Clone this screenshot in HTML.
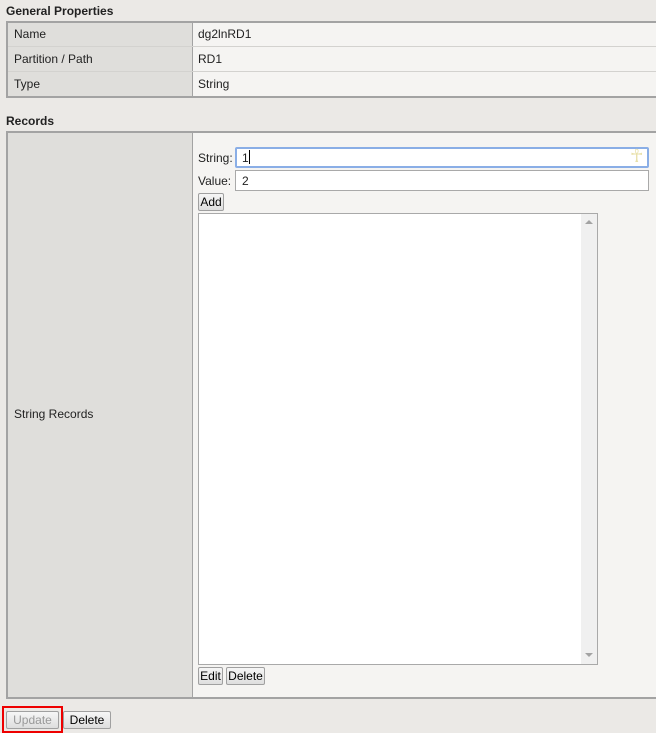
<!DOCTYPE html>
<html><head><style>
*{box-sizing:border-box;margin:0;padding:0}
body{width:656px;height:733px;background:#ebe9e6;font-family:"Liberation Sans",Arial,sans-serif;font-size:12px;color:#222;position:relative;overflow:hidden}
.a{position:absolute}
.h{font-weight:bold;color:#222;font-size:12px}
.lc{background:#dfdedb}
.rc{background:#f5f4f2}
.btn{position:absolute;border:1px solid #a0a0a0;background:linear-gradient(#f6f6f6,#dedede);font-size:12px;height:18px;line-height:16px;text-align:center;color:#000;border-radius:2px}
</style></head><body>
<div class="a h" style="left:6px;top:4px">General Properties</div>
<div class="a" style="left:6px;top:21px;width:650px;height:77px;border-top:2px solid #a3a3a3;border-left:2px solid #a3a3a3;border-bottom:2px solid #a3a3a3;background:#f5f4f2"></div>
<div class="a lc" style="left:8px;top:23px;width:184px;height:73px"></div>
<div class="a" style="left:192px;top:23px;width:1px;height:73px;background:#a3a3a3"></div>
<div class="a" style="left:8px;top:46px;width:648px;height:1px;background:#d3d2cf"></div>
<div class="a" style="left:8px;top:71px;width:648px;height:1px;background:#d3d2cf"></div>
<div class="a" style="left:14px;top:27px">Name</div>
<div class="a" style="left:198px;top:27px">dg2lnRD1</div>
<div class="a" style="left:14px;top:52px">Partition / Path</div>
<div class="a" style="left:198px;top:52px">RD1</div>
<div class="a" style="left:14px;top:77px">Type</div>
<div class="a" style="left:198px;top:77px">String</div>

<div class="a h" style="left:6px;top:114px">Records</div>
<div class="a" style="left:6px;top:131px;width:650px;height:568px;border-top:2px solid #a3a3a3;border-left:2px solid #a3a3a3;border-bottom:2px solid #a3a3a3;background:#f5f4f2"></div>
<div class="a lc" style="left:8px;top:133px;width:184px;height:564px"></div>
<div class="a" style="left:192px;top:133px;width:1px;height:564px;background:#a3a3a3"></div>
<div class="a" style="left:14px;top:407px">String Records</div>

<div class="a" style="left:198px;top:151px">String:</div>
<div class="a" style="left:235px;top:147px;width:414px;height:21px;background:#fff;border:2px solid #8aaee6;border-radius:2px"></div>
<div class="a" style="left:242px;top:151px">1</div>
<div class="a" style="left:249px;top:150px;width:1px;height:14px;background:#000"></div>
<div class="a" style="left:630px;top:146px;color:#e8e0a8;font-size:18px">☥</div>
<div class="a" style="left:198px;top:174px">Value:</div>
<div class="a" style="left:235px;top:170px;width:414px;height:21px;background:#fff;border:1px solid #a9a9a9"></div>
<div class="a" style="left:242px;top:174px">2</div>
<div class="btn" style="left:198px;top:193px;width:26px">Add</div>

<div class="a" style="left:198px;top:213px;width:400px;height:452px;background:#fff;border:1px solid #a9a9a9"></div>
<div class="a" style="left:581px;top:214px;width:16px;height:450px;background:#f0f0f0"></div>
<div class="a" style="left:585px;top:220px;width:0;height:0;border-left:4px solid transparent;border-right:4px solid transparent;border-bottom:4px solid #a3a3a3"></div>
<div class="a" style="left:585px;top:653px;width:0;height:0;border-left:4px solid transparent;border-right:4px solid transparent;border-top:4px solid #a3a3a3"></div>

<div class="btn" style="left:198px;top:667px;width:25px">Edit</div>
<div class="btn" style="left:226px;top:667px;width:39px">Delete</div>

<div class="a" style="left:2px;top:706px;width:61px;height:27px;border:2px solid #e00"></div>
<div class="btn" style="left:6px;top:711px;width:53px;color:#999">Update</div>
<div class="btn" style="left:63px;top:711px;width:48px">Delete</div>
</body></html>
